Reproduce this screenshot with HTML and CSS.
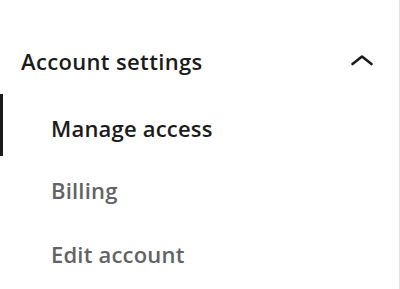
FILE: index.html
```html
<!DOCTYPE html>
<html lang="en">
<head>
    <meta charset="UTF-8">
    <meta name="viewport" content="width=device-width, initial-scale=1.0">
    <title>Account settings</title>
    <link rel="stylesheet" href="styles.css">
</head>
<body>
    <nav class="side-nav">
        <button class="section-header" type="button">
            <span>Account settings</span>
            <svg class="chevron" width="24" height="12" viewBox="0 0 24 12">
                <path d="M2.5 10 L12 2.5 L21.5 10" fill="none" stroke="#1b1b1b" stroke-width="2.6" stroke-linecap="round" stroke-linejoin="round"/>
            </svg>
        </button>
        <ul class="section-items">
            <li class="nav-item active">Manage access</li>
            <li class="nav-item">Billing</li>
            <li class="nav-item">Edit account</li>
        </ul>
    </nav>
</body>
</html>
```

FILE: styles.css
```css
body {
    margin: 0;
    font-family: "Open Sans", "Noto Sans", sans-serif;
    background: #fff;
}
.side-nav {
    height: 289px;
    box-sizing: border-box;
    padding-top: 30px;
    border-right: 1px solid #e1e1e1;
}
.section-header {
    display: flex;
    width: 100%;
    height: 64px;
    align-items: center;
    justify-content: space-between;
    padding: 0 25px 2px 21px;
    border: none;
    background: none;
    font-family: inherit;
    font-size: 22px;
    font-weight: 600;
    color: #1b1b1b;
    letter-spacing: 0.35px;
}
.chevron {
    margin-bottom: 2px;
}
.section-items {
    list-style: none;
    margin: 0;
    padding: 0;
}
.nav-item {
    box-sizing: border-box;
    height: 62px;
    display: flex;
    align-items: center;
    padding: 5px 0 0 48px;
    font-size: 22px;
    font-weight: 600;
    color: #636363;
    letter-spacing: 0.2px;
    border-left: 3px solid transparent;
}
.nav-item.active {
    color: #1b1b1b;
    border-left-color: #1b1b1b;
}
.nav-item:last-child {
    padding-top: 9px;
}
```
